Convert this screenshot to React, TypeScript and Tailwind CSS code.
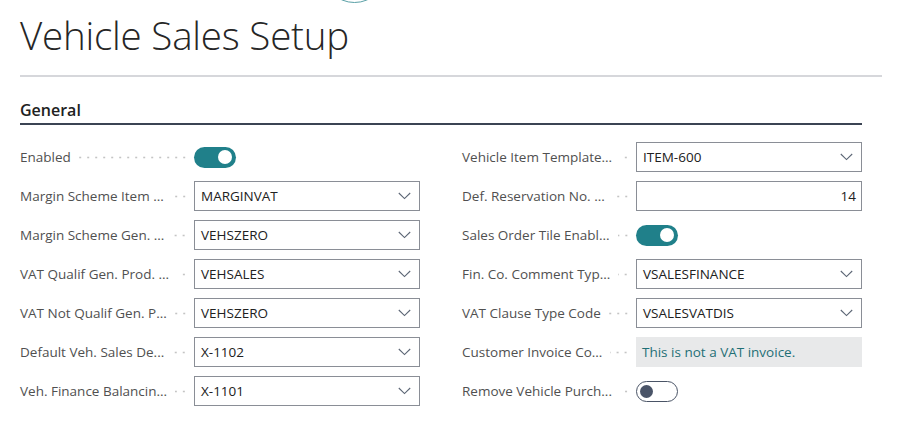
import React from "react";

const font = { fontFamily: '"Open Sans", "Noto Sans", sans-serif' };

function Chevron() {
  return (
    <svg width="13" height="8" viewBox="0 0 13 8" className="shrink-0">
      <path d="M0.8 1 L6.5 6.6 L12.2 1" fill="none" stroke="#5b6574" strokeWidth="1.1" />
    </svg>
  );
}

function Label({ text }: { text: string }) {
  return (
    <div className="flex items-center w-[174px] shrink-0">
      <span className="whitespace-nowrap text-[13.5px] text-[#505050] leading-[20px]">{text}</span>
      <span className="flex-1 h-[3px] ml-[8px] mr-[6px] bg-[image:radial-gradient(circle,#c4c4c4_0.9px,transparent_1.2px)] bg-[length:8px_3px] bg-repeat-x bg-right" />
    </div>
  );
}

function Select({ value }: { value: string }) {
  return (
    <div className="w-[226px] h-[30px] border border-[#8a8e96] flex items-center justify-between pl-[6px] pr-[8px]">
      <span className="text-[13.5px] text-[#212121]">{value}</span>
      <Chevron />
    </div>
  );
}

function NumberField({ value }: { value: string }) {
  return (
    <div className="w-[226px] h-[30px] border border-[#8a8e96] flex items-center justify-end pr-[5px]">
      <span className="text-[13.5px] text-[#212121]">{value}</span>
    </div>
  );
}

function ReadOnly({ value }: { value: string }) {
  return (
    <div className="w-[226px] h-[30px] bg-[#e8e9ea] flex items-center pl-[6px]">
      <span className="text-[13.5px] text-[#1f6f76]">{value}</span>
    </div>
  );
}

function Toggle({ on }: { on: boolean }) {
  return on ? (
    <div className="w-[42px] h-[21px] rounded-full bg-[#20808a] flex items-center justify-end pr-[4px]">
      <div className="w-[14px] h-[14px] rounded-full bg-white" />
    </div>
  ) : (
    <div className="w-[42px] h-[21px] rounded-full border-[1.5px] border-[#4a5466] flex items-center pl-[3px]">
      <div className="w-[13px] h-[13px] rounded-full bg-[#4a5468]" />
    </div>
  );
}

type Row = { label: string; kind: "select" | "toggle" | "toggleOff" | "number" | "readonly"; value?: string };

function Field({ row }: { row: Row }) {
  let ctrl: React.ReactNode = null;
  if (row.kind === "select") ctrl = <Select value={row.value!} />;
  else if (row.kind === "toggle") ctrl = <Toggle on />;
  else if (row.kind === "toggleOff") ctrl = <Toggle on={false} />;
  else if (row.kind === "number") ctrl = <NumberField value={row.value!} />;
  else ctrl = <ReadOnly value={row.value!} />;
  return (
    <div className="flex items-center h-[30px]">
      <Label text={row.label} />
      {ctrl}
    </div>
  );
}

const left: Row[] = [
  { label: "Enabled", kind: "toggle" },
  { label: "Margin Scheme Item ...", kind: "select", value: "MARGINVAT" },
  { label: "Margin Scheme Gen. ...", kind: "select", value: "VEHSZERO" },
  { label: "VAT Qualif Gen. Prod. ...", kind: "select", value: "VEHSALES" },
  { label: "VAT Not Qualif Gen. P...", kind: "select", value: "VEHSZERO" },
  { label: "Default Veh. Sales De...", kind: "select", value: "X-1102" },
  { label: "Veh. Finance Balancin...", kind: "select", value: "X-1101" },
];

const right: Row[] = [
  { label: "Vehicle Item Template...", kind: "select", value: "ITEM-600" },
  { label: "Def. Reservation No. ...", kind: "number", value: "14" },
  { label: "Sales Order Tile Enabl...", kind: "toggle" },
  { label: "Fin. Co. Comment Typ...", kind: "select", value: "VSALESFINANCE" },
  { label: "VAT Clause Type Code", kind: "select", value: "VSALESVATDIS" },
  { label: "Customer Invoice Co...", kind: "readonly", value: "This is not a VAT invoice." },
  { label: "Remove Vehicle Purch...", kind: "toggleOff" },
];

export default function App() {
  return (
    <div className="relative w-[900px] h-[434px] bg-white overflow-hidden" style={font}>
      <div className="absolute left-[322px] top-[-62px] w-[65px] h-[65px] rounded-full border-[1.5px] border-[#5aa0a6]" />
      <div className="pl-[20px] pt-[9px]">
        <h1 className="text-[38.5px] font-light text-[#262626] leading-[52px] tracking-[-0.2px]">Vehicle Sales Setup</h1>
        <div className="mt-[14px] w-[862px] h-[2px] bg-[#d6d7db]" />
        <div className="mt-[22px] w-[842px] border-b-2 border-[#3b4453] pb-[2px]">
          <h2 className="text-[16px] font-semibold text-[#212121] leading-[22px]">General</h2>
        </div>
        <div className="mt-[17px] w-[842px] flex gap-x-[42px]">
          <div className="flex flex-col gap-y-[9px] w-[400px]">
            {left.map((r) => (
              <Field key={r.label} row={r} />
            ))}
          </div>
          <div className="flex flex-col gap-y-[9px] w-[400px]">
            {right.map((r) => (
              <Field key={r.label} row={r} />
            ))}
          </div>
        </div>
      </div>
    </div>
  );
}
